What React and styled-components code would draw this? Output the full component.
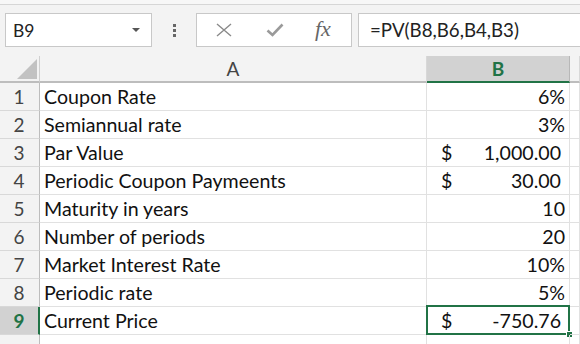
import React from "react";
import styled, { createGlobalStyle } from "styled-components";

const Global = createGlobalStyle`
  html, body { margin: 0; padding: 0; background: #ffffff; }
  * { box-sizing: border-box; }
`;

const FONT = `"Lato", "Liberation Sans", sans-serif`;

const Page = styled.div`
  width: 580px;
  height: 344px;
  overflow: hidden;
  background: #f3f3f3;
  font-family: ${FONT};
  position: relative;
`;

const TopStrip = styled.div`
  height: 5px;
  background: #f7f7f7;
  border-bottom: 1px solid #d6d6d6;
`;

const FormulaBar = styled.div`
  display: flex;
  padding: 8px 0 0 5px;
  height: 51px;
  align-items: flex-start;
`;

const Box = styled.div`
  height: 34px;
  background: #ffffff;
  border: 1px solid #c8c8c8;
  display: flex;
  align-items: center;
`;

const NameBox = styled(Box)`
  width: 147px;
  padding: 0 0 0 7px;
  justify-content: space-between;
  font-size: 17.5px;
  color: #222;
`;

const DropArrow = styled.span`
  width: 0;
  height: 0;
  border-left: 4px solid transparent;
  border-right: 4px solid transparent;
  border-top: 4px solid #555;
  margin-right: 11px;
`;

const Dots = styled.div`
  width: 44px;
  height: 34px;
  display: flex;
  flex-direction: column;
  align-items: center;
  justify-content: center;
  gap: 2px;
  span {
    width: 3px;
    height: 3px;
    background: #666;
  }
`;

const FxBox = styled(Box)`
  width: 156px;
  padding: 0 0 0 18px;
`;

const IconSlot = styled.div`
  width: 51px;
  display: flex;
  align-items: center;
  justify-content: flex-start;
`;

const Fx = styled.span`
  font-family: "Liberation Serif", "DejaVu Serif", serif;
  font-style: italic;
  font-size: 22px;
  color: #666666;
  margin-left: -2px;
  margin-top: -2px;
`;

const FormulaInput = styled(Box)`
  flex: 1;
  margin-left: 6px;
  border-right: none;
  padding-left: 11px;
  font-size: 18.7px;
  color: #222;
`;

const Grid = styled.div`
  display: grid;
  grid-template-columns: 40px 387px 143px 1fr;
  grid-template-rows: 27px repeat(10, 28px);
  background: #ffffff;
`;

const Corner = styled.div`
  background: #f3f3f3;
  border-right: 1px solid #d0d0d0;
  border-bottom: 2px solid #bdbdbd;
  display: flex;
  align-items: flex-end;
  justify-content: flex-end;
  padding: 0 2px 2px 0;
  svg { display: block; }
`;

const ColHead = styled.div`
  background: ${(p) => (p.$active ? "#d2d2d2" : "#f3f3f3")};
  border-right: 1px solid ${(p) => (p.$active ? "#b8b8b8" : "#d8d8d8")};
  border-bottom: 2px solid ${(p) => (p.$active ? "#217346" : "#bdbdbd")};
  color: ${(p) => (p.$active ? "#217346" : "#444")};
  font-weight: ${(p) => (p.$active ? 700 : 400)};
  font-size: 19px;
  display: flex;
  align-items: flex-end;
  justify-content: center;
  padding-bottom: 1px;
`;

const RowHead = styled.div`
  background: ${(p) => (p.$active ? "#d2d2d2" : "#f3f3f3")};
  border-right: ${(p) => (p.$active ? "2px solid #217346" : "1px solid #bdbdbd")};
  border-bottom: 1px solid #d8d8d8;
  color: ${(p) => (p.$active ? "#217346" : "#444")};
  font-weight: ${(p) => (p.$active ? 700 : 400)};
  font-size: 19px;
  display: flex;
  align-items: flex-end;
  justify-content: center;
  padding: 0 ${(p) => (p.$active ? 0 : 1)}px 2px 0;
`;

const Cell = styled.div`
  position: relative;
  border-right: 1px solid #e1e1e1;
  border-bottom: 1px solid #e1e1e1;
  font-size: 19.6px;
  color: #111;
  display: flex;
  align-items: flex-end;
  justify-content: ${(p) => (p.$right ? "flex-end" : "flex-start")};
  padding: 0 ${(p) => (p.$right ? 4 : 0)}px 2px ${(p) => (p.$right ? 0 : 4)}px;
  white-space: nowrap;
`;

const Money = styled.div`
  flex: 1;
  display: flex;
  justify-content: space-between;
  padding: 0 8px 0 10px;
`;

const Selection = styled.div`
  position: absolute;
  left: -1px;
  top: -2px;
  right: -1px;
  bottom: -1px;
  border: 2px solid #217346;
  pointer-events: none;
`;

const Handle = styled.div`
  position: absolute;
  right: -5px;
  bottom: -5px;
  width: 7px;
  height: 7px;
  background: #217346;
  border: 1px solid #ffffff;
`;

const rows = [
  ["Coupon Rate", "6%"],
  ["Semiannual rate", "3%"],
  ["Par Value", "1,000.00", true],
  ["Periodic Coupon Paymeents", "30.00", true],
  ["Maturity in years", "10"],
  ["Number of periods", "20"],
  ["Market Interest Rate", "10%"],
  ["Periodic rate", "5%"],
  ["Current Price", "-750.76", true],
];

export default function App() {
  return (
    <Page>
      <Global />
      <TopStrip />
      <FormulaBar>
        <NameBox>
          B9
          <DropArrow />
        </NameBox>
        <Dots>
          <span />
          <span />
          <span />
        </Dots>
        <FxBox>
          <IconSlot>
            <svg width="18" height="14" viewBox="0 0 18 14">
              <path d="M2 1 L16 13 M16 1 L2 13" stroke="#8a8a8a" strokeWidth="1.4" fill="none" />
            </svg>
          </IconSlot>
          <IconSlot>
            <svg width="18" height="14" viewBox="0 0 18 14">
              <path d="M1.5 7.5 L6.5 12 L16.5 1.5" stroke="#9a9a9a" strokeWidth="2.6" fill="none" />
            </svg>
          </IconSlot>
          <Fx>fx</Fx>
        </FxBox>
        <FormulaInput>=PV(B8,B6,B4,B3)</FormulaInput>
      </FormulaBar>
      <Grid>
        <Corner>
          <svg width="20" height="20" viewBox="0 0 20 20">
            <path d="M20 0 L20 20 L0 20 Z" fill="#c2c2c2" />
          </svg>
        </Corner>
        <ColHead>A</ColHead>
        <ColHead $active>B</ColHead>
        <ColHead />
        {rows.map(([label, value, money], i) => {
          const active = i === 8;
          return (
            <React.Fragment key={label}>
              <RowHead $active={active}>{i + 1}</RowHead>
              <Cell>{label}</Cell>
              <Cell $right={!money}>
                {money ? (
                  <Money>
                    <span>$</span>
                    <span>{value}</span>
                  </Money>
                ) : (
                  value
                )}
                {active && (
                  <Selection>
                    <Handle />
                  </Selection>
                )}
              </Cell>
              <Cell />
            </React.Fragment>
          );
        })}
        <RowHead />
        <Cell />
        <Cell />
        <Cell />
      </Grid>
    </Page>
  );
}
